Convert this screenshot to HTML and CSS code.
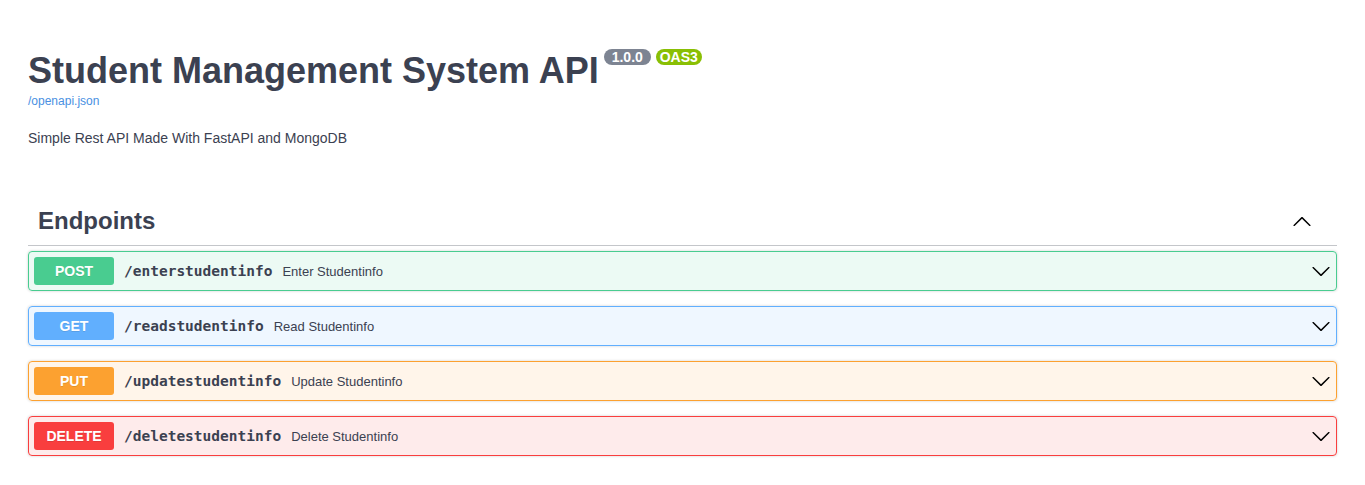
FILE: index.html
```html
<!DOCTYPE html>
<html lang="en">
<head>
<meta charset="utf-8">
<title>Student Management System API - Swagger UI</title>
<link rel="stylesheet" href="styles.css">
</head>
<body>
<div class="wrapper">
  <section class="info">
    <hgroup class="main">
      <h2 class="title">Student Management System API<small class="badge badge-version"><pre class="version"> 1.0.0 </pre></small><small class="badge badge-oas"><pre class="version">OAS3</pre></small></h2>
      <a class="url" href="#">/openapi.json</a>
    </hgroup>
    <p class="description">Simple Rest API Made With FastAPI and MongoDB</p>
  </section>

  <section class="tag-section">
    <h3 class="tag">
      <span class="tag-name">Endpoints</span>
      <button class="expand" aria-label="Collapse">
        <svg width="20" height="20" viewBox="0 0 20 20"><path d="M17.418 14.908c.272.268.709.268.979 0s.271-.701 0-.969l-7.908-7.83c-.27-.268-.707-.268-.979 0l-7.908 7.83c-.27.268-.27.701 0 .969.271.268.709.268.979 0L10 7.767l7.418 7.141z"/></svg>
      </button>
    </h3>

    <div class="opblock opblock-post">
      <div class="summary">
        <span class="method">POST</span>
        <span class="path">/enterstudentinfo</span>
        <span class="desc">Enter Studentinfo</span>
        <svg class="arrow" width="20" height="20" viewBox="0 0 20 20"><path d="M17.418 6.109c.272-.268.709-.268.979 0s.271.701 0 .969l-7.908 7.830c-.27.268-.707.268-.979 0l-7.908-7.830c-.27-.268-.27-.701 0-.969.271-.268.709-.268.979 0L10 13.25l7.418-7.141z"/></svg>
      </div>
    </div>

    <div class="opblock opblock-get">
      <div class="summary">
        <span class="method">GET</span>
        <span class="path">/readstudentinfo</span>
        <span class="desc">Read Studentinfo</span>
        <svg class="arrow" width="20" height="20" viewBox="0 0 20 20"><path d="M17.418 6.109c.272-.268.709-.268.979 0s.271.701 0 .969l-7.908 7.830c-.27.268-.707.268-.979 0l-7.908-7.830c-.27-.268-.27-.701 0-.969.271-.268.709-.268.979 0L10 13.25l7.418-7.141z"/></svg>
      </div>
    </div>

    <div class="opblock opblock-put">
      <div class="summary">
        <span class="method">PUT</span>
        <span class="path">/updatestudentinfo</span>
        <span class="desc">Update Studentinfo</span>
        <svg class="arrow" width="20" height="20" viewBox="0 0 20 20"><path d="M17.418 6.109c.272-.268.709-.268.979 0s.271.701 0 .969l-7.908 7.830c-.27.268-.707.268-.979 0l-7.908-7.830c-.27-.268-.27-.701 0-.969.271-.268.709-.268.979 0L10 13.25l7.418-7.141z"/></svg>
      </div>
    </div>

    <div class="opblock opblock-delete">
      <div class="summary">
        <span class="method">DELETE</span>
        <span class="path">/deletestudentinfo</span>
        <span class="desc">Delete Studentinfo</span>
        <svg class="arrow" width="20" height="20" viewBox="0 0 20 20"><path d="M17.418 6.109c.272-.268.709-.268.979 0s.271.701 0 .969l-7.908 7.830c-.27.268-.707.268-.979 0l-7.908-7.830c-.27-.268-.27-.701 0-.969.271-.268.709-.268.979 0L10 13.25l7.418-7.141z"/></svg>
      </div>
    </div>
  </section>
</div>
</body>
</html>
```

FILE: styles.css
```css
html, body {
  margin: 0;
  padding: 0;
  background: #ffffff;
}

body {
  font-family: "Liberation Sans", Arial, sans-serif;
  color: #3b4151;
}

.wrapper {
  box-sizing: border-box;
  padding: 0 28px;
  width: 100%;
}

.info {
  padding-top: 50px;
  margin-bottom: 51px;
}

.main {
  margin: 0 0 22px;
  font-size: 14px;
}

.title {
  margin: 0;
  font-size: 36px;
  font-weight: 700;
  color: #3b4151;
  font-family: "Liberation Sans", Arial, sans-serif;
}

.badge {
  display: inline-block;
  vertical-align: top;
  margin: -1px 0 0 5px;
  padding: 2px 4px;
  border-radius: 57px;
  background: #7d8492;
}

.badge-oas {
  background: #89bf04;
}

.badge .version {
  margin: 0;
  padding: 0;
  color: #ffffff;
  font-family: "Liberation Sans", Arial, sans-serif;
  font-size: 14px;
  font-weight: 700;
  line-height: 12px;
  white-space: pre;
}

.url {
  font-size: 12px;
  color: #4990e2;
  text-decoration: none;
  font-family: "Liberation Sans", Arial, sans-serif;
}

.description {
  margin: 0;
  font-size: 14px;
  color: #3b4151;
}

.tag {
  display: flex;
  align-items: center;
  margin: 0 0 5px;
  padding: 10px 20px 10px 10px;
  border-bottom: 1px solid rgba(59, 65, 81, 0.3);
  font-size: 24px;
  font-weight: 700;
  color: #3b4151;
}

.tag-name {
  flex: 1;
}

.expand {
  display: flex;
  align-items: center;
  border: none;
  background: none;
  padding: 0 5px 0 10px;
  margin: 0;
  cursor: pointer;
}

.expand svg {
  fill: #000;
}

.opblock {
  margin: 0 0 15px;
  border: 1px solid #000;
  border-radius: 4px;
  box-shadow: 0 0 3px rgba(0, 0, 0, 0.19);
}

.summary {
  display: flex;
  align-items: center;
  padding: 5px;
}

.method {
  min-width: 80px;
  padding: 6px 0;
  border-radius: 3px;
  font-size: 14px;
  line-height: 16px;
  font-weight: 700;
  text-align: center;
  color: #fff;
  text-shadow: 0 1px 0 rgba(0, 0, 0, 0.1);
}

.path {
  padding: 0 10px;
  font-family: "DejaVu Sans Mono", "Liberation Mono", monospace;
  font-size: 14.5px;
  font-weight: 700;
  color: #3b4151;
}

.desc {
  flex: 1;
  font-size: 13px;
  color: #3b4151;
}

.arrow {
  fill: #000;
}

.opblock-post { background: rgba(73, 204, 144, 0.1); border-color: #49cc90; }
.opblock-post .method { background: #49cc90; }

.opblock-get { background: rgba(97, 175, 254, 0.1); border-color: #61affe; }
.opblock-get .method { background: #61affe; }

.opblock-put { background: rgba(252, 161, 48, 0.1); border-color: #fca130; }
.opblock-put .method { background: #fca130; }

.opblock-delete { background: rgba(249, 62, 62, 0.1); border-color: #f93e3e; }
.opblock-delete .method { background: #f93e3e; }
```
